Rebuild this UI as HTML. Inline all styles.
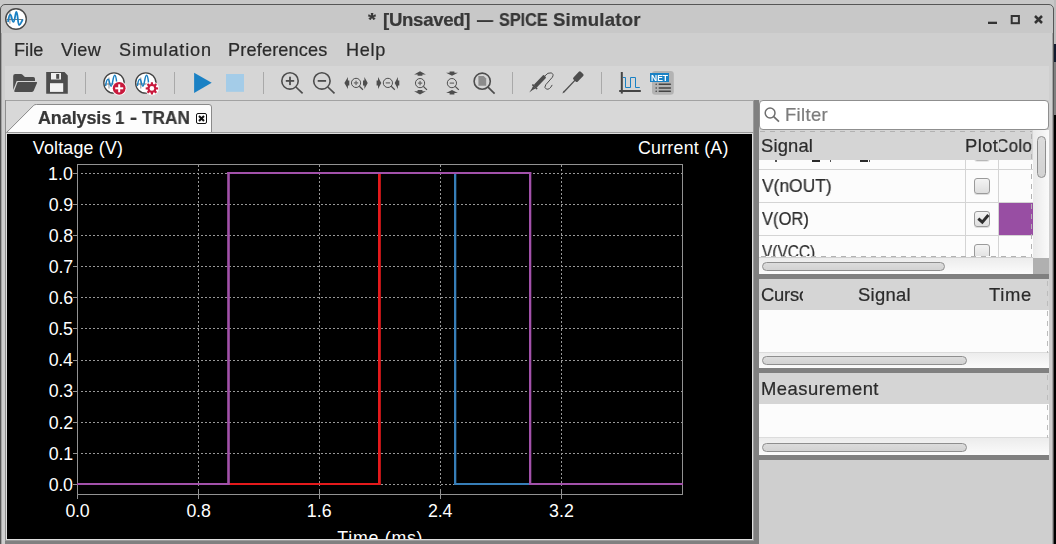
<!DOCTYPE html><html><head><meta charset="utf-8"><title>SPICE Simulator</title><style>
html,body{margin:0;padding:0;}
body{width:1056px;height:544px;overflow:hidden;position:relative;background:#cfcfcf;font-family:'Liberation Sans',sans-serif;}
.a{position:absolute;}
.t{position:absolute;white-space:pre;line-height:40px;height:40px;}
.ui{will-change:transform;-webkit-text-stroke:.22px currentColor;}
.hdr{background:#d5d5d5;}
.band{background:#808080;}
.track{background:linear-gradient(#ececec,#fbfbfb);}
.thumb{position:absolute;box-sizing:border-box;border:1px solid #8e8e8e;border-radius:5px;background:linear-gradient(#dcdcdc,#d2d2d2);}
.cb{position:absolute;box-sizing:border-box;width:16px;height:16px;border:1px solid #9a9a9a;border-radius:3px;background:linear-gradient(#f4f4f4,#dedede);box-shadow:0 1px 0 rgba(0,0,0,0.12);}
.sep{position:absolute;top:72px;width:1px;height:22px;background:#a9a9a9;}
</style></head><body><div class="a" style="left:0;top:0;width:1056px;height:5px;background:#c8c8c8"></div><div class="a" style="left:0;top:4px;width:1054px;height:560px;box-sizing:border-box;border:1px solid #565656;border-radius:5px 5px 0 0;background:#c8c8c8;"></div><div class="a" style="left:1054px;top:0;width:2px;height:44px;background:#bcbcbc"></div><div class="a" style="left:1054px;top:44px;width:2px;height:18px;background:#111a2e"></div><div class="a" style="left:1054px;top:62px;width:2px;height:53px;background:#7f7f7f"></div><div class="a" style="left:1054px;top:115px;width:2px;height:429px;background:#000"></div><div class="a" style="left:1px;top:33px;width:1052px;height:67px;background:#cfcfcf"></div><div class="a" style="left:5px;top:66px;width:1044px;height:34px;background:#d6d6d6"></div><div class="a" style="left:1px;top:100px;width:1052px;height:444px;background:#cfcfcf"></div><div class="a" style="left:1px;top:33px;width:1px;height:511px;background:#a4a4a4"></div><div class="a" style="left:1052px;top:33px;width:1px;height:511px;background:#a4a4a4"></div><svg class="a" style="left:0;top:5px" width="34" height="28" viewBox="0 5 34 28"><circle cx="16" cy="19" r="10.3" fill="#fff" stroke="#4a4a4a" stroke-width="1.4"/><line x1="6.5" x2="23" y1="19.5" y2="19.5" stroke="#555" stroke-width=".8"/><line x1="9.9" x2="9.9" y1="12" y2="23.8" stroke="#777" stroke-width=".8"/><path d="M8.1 21.3 C8.8 16.5 9.4 14.7 10.3 14.7 C11.6 14.7 12 21.9 13.4 21.9 C15 21.9 15.2 11.9 16.4 11.9 C17.9 11.9 17.7 25 19.1 25 C20.4 25 21 22.5 22.5 20" fill="none" stroke="#1a81c4" stroke-width="1.8" stroke-linecap="round"/></svg><svg class="a" style="left:980px;top:8px" width="70" height="22" viewBox="980 8 70 22"><rect x="988" y="21.7" width="9" height="2.3" fill="#333"/><rect x="1011.7" y="16" width="7.2" height="7.2" fill="none" stroke="#333" stroke-width="2"/><path d="M1035 16 l7 7 M1042 16 l-7 7" stroke="#333" stroke-width="2.5" fill="none"/></svg><span class="t ui" style="left:368.38px;top:0.0px;font:bold 18.6px/40px 'Liberation Sans',sans-serif;letter-spacing:0.0px;color:#383838;transform:scaleX(1.1054);transform-origin:0 0;">*</span><span class="t ui" style="left:383.04px;top:0.0px;font:bold 18.6px/40px 'Liberation Sans',sans-serif;letter-spacing:-0.291px;color:#383838;">[Unsaved]</span><span class="t ui" style="left:476.79px;top:0.0px;font:bold 18.6px/40px 'Liberation Sans',sans-serif;letter-spacing:0.0px;color:#383838;transform:scaleX(0.8631);transform-origin:0 0;">—</span><span class="t ui" style="left:498.53px;top:0.0px;font:bold 18.6px/40px 'Liberation Sans',sans-serif;letter-spacing:0.0px;color:#383838;transform:scaleX(0.8711);transform-origin:0 0;">SPICE</span><span class="t ui" style="left:552.59px;top:0.0px;font:bold 18.6px/40px 'Liberation Sans',sans-serif;letter-spacing:0.221px;color:#383838;">Simulator</span><span class="t ui" style="left:13.74px;top:29.6px;font:normal 18.1px/40px 'Liberation Sans',sans-serif;letter-spacing:0.052px;color:#2b2b2b;">File</span><span class="t ui" style="left:60.92px;top:29.6px;font:normal 18.1px/40px 'Liberation Sans',sans-serif;letter-spacing:0.289px;color:#2b2b2b;">View</span><span class="t ui" style="left:118.56px;top:29.6px;font:normal 18.1px/40px 'Liberation Sans',sans-serif;letter-spacing:0.83px;color:#2b2b2b;">Simulation</span><span class="t ui" style="left:227.79px;top:29.6px;font:normal 18.1px/40px 'Liberation Sans',sans-serif;letter-spacing:0.18px;color:#2b2b2b;">Preferences</span><span class="t ui" style="left:345.99px;top:29.6px;font:normal 18.1px/40px 'Liberation Sans',sans-serif;letter-spacing:0.661px;color:#2b2b2b;">Help</span><svg class="a" style="left:0;top:66px" width="700" height="34" viewBox="0 66 700 34"><path d="M13.2 76 Q13.2 74 15.2 74 H21 Q21.9 74 22.6 74.7 L24.3 76.4 Q24.9 77 25.8 77 H33.2 Q35 77 35 78.8 V80.9 H16.7 L13.2 90 Z" fill="#4d4d4d"/><path d="M18.4 82 H36.3 Q37.5 82 37 83.1 L33.7 90.8 Q33.2 91.9 32 91.9 H15 Q13.8 91.9 14.3 90.8 L17.3 82.8 Q17.6 82 18.4 82 Z" fill="#4d4d4d"/><path d="M46.2 72 h18.3 l3.3 3.6 v18.2 h-21.6 z" fill="#4d4d4d"/><rect x="51" y="73" width="10" height="6.5" fill="#f0f0f0"/><rect x="56.2" y="74" width="3" height="4.8" fill="#4d4d4d"/><rect x="50" y="83.2" width="13.2" height="8.7" fill="#f2f2f2"/><circle cx="114" cy="83" r="10.2" fill="#fff" stroke="#444" stroke-width="1.3"/><line x1="104.5" x2="118" y1="84" y2="84" stroke="#555" stroke-width="0.8"/><line x1="109" x2="109" y1="77.5" y2="88.5" stroke="#777" stroke-width="0.8"/><path d="M105.7 85.4 C106.4 80.5 107.4 79.2 108.2 79.3 C109.4 79.4 109.8 86.2 111.1 86.2 C112.6 86.2 113 75.3 114.8 75.3 C116.2 75.3 116.6 82 117.2 86" fill="none" stroke="#1a81c4" stroke-width="1.5" stroke-linecap="round"/><circle cx="145.8" cy="83" r="10.2" fill="#fff" stroke="#444" stroke-width="1.3"/><line x1="136.3" x2="149.8" y1="84" y2="84" stroke="#555" stroke-width="0.8"/><line x1="140.8" x2="140.8" y1="77.5" y2="88.5" stroke="#777" stroke-width="0.8"/><path d="M137.5 85.4 C138.2 80.5 139.2 79.2 140.0 79.3 C141.2 79.4 141.6 86.2 142.9 86.2 C144.4 86.2 144.8 75.3 146.6 75.3 C148.0 75.3 148.4 82 149.0 86" fill="none" stroke="#1a81c4" stroke-width="1.5" stroke-linecap="round"/><circle cx="119.2" cy="88.3" r="7.3" fill="#fff"/><circle cx="119.2" cy="88.3" r="6.4" fill="#c8193c"/><rect x="115.2" y="87.3" width="8" height="2" fill="#fff"/><rect x="118.2" y="84.3" width="2" height="8" fill="#fff"/><circle cx="151.9" cy="88.4" r="7" fill="#fff"/><polygon points="158.12,87.40 158.12,89.40 156.24,89.60 155.82,90.62 157.01,92.09 155.59,93.51 154.12,92.32 153.10,92.74 152.90,94.62 150.90,94.62 150.70,92.74 149.68,92.32 148.21,93.51 146.79,92.09 147.98,90.62 147.56,89.60 145.68,89.40 145.68,87.40 147.56,87.20 147.98,86.18 146.79,84.71 148.21,83.29 149.68,84.48 150.70,84.06 150.90,82.18 152.90,82.18 153.10,84.06 154.12,84.48 155.59,83.29 157.01,84.71 155.82,86.18 156.24,87.20" fill="#c8193c"/><circle cx="151.9" cy="88.4" r="2.3" fill="#fff"/><polygon points="194.1,72.7 194.1,93 211.7,82.8" fill="#1a81c4"/><rect x="226" y="74" width="18" height="17.8" fill="#a4cce8"/><circle cx="290" cy="80.9" r="8.2" fill="none" stroke="#4d4d4d" stroke-width="1.6"/><line x1="295.9" y1="87" x2="302.6" y2="93.3" stroke="#4d4d4d" stroke-width="1.7"/><rect x="285.8" y="80" width="8.4" height="1.8" fill="#4d4d4d"/><rect x="289.1" y="76.7" width="1.8" height="8.4" fill="#4d4d4d"/><circle cx="321.9" cy="80.9" r="8.2" fill="none" stroke="#4d4d4d" stroke-width="1.6"/><line x1="327.79999999999995" y1="87" x2="334.5" y2="93.3" stroke="#4d4d4d" stroke-width="1.7"/><rect x="317.7" y="80" width="8.4" height="1.8" fill="#4d4d4d"/><circle cx="356.05" cy="82.9" r="4.6" fill="none" stroke="#4d4d4d" stroke-width="1"/><line x1="359.35" y1="86.2" x2="362.95" y2="89.7" stroke="#4d4d4d" stroke-width="1.2"/><rect x="353.85" y="82.30000000000001" width="4.4" height="1.2" fill="#666"/><rect x="355.45" y="80.7" width="1.2" height="4.4" fill="#666"/><polygon points="344.4,83 347.9,77.1 347.9,80.6 349.29999999999995,80.6 349.29999999999995,85.4 347.9,85.4 347.9,88.9" fill="#4d4d4d"/><polygon points="367.7,83 364.4,77.1 364.4,80.6 363.0,80.6 363.0,85.4 364.4,85.4 364.4,88.9" fill="#4d4d4d"/><circle cx="387.9" cy="82.9" r="4.6" fill="none" stroke="#4d4d4d" stroke-width="1"/><line x1="391.2" y1="86.2" x2="394.79999999999995" y2="89.7" stroke="#4d4d4d" stroke-width="1.2"/><rect x="385.7" y="82.30000000000001" width="4.4" height="1.2" fill="#666"/><polygon points="381.3,83 378,77.1 378,80.6 376.6,80.6 376.6,85.4 378,85.4 378,88.9" fill="#4d4d4d"/><polygon points="394.7,83 397.9,77.1 397.9,80.6 399.29999999999995,80.6 399.29999999999995,85.4 397.9,85.4 397.9,88.9" fill="#4d4d4d"/><circle cx="420.05" cy="83.1" r="4.6" fill="none" stroke="#4d4d4d" stroke-width="1"/><line x1="423.35" y1="86.39999999999999" x2="426.95" y2="89.89999999999999" stroke="#4d4d4d" stroke-width="1.2"/><rect x="417.85" y="82.5" width="4.4" height="1.2" fill="#666"/><rect x="419.45" y="80.89999999999999" width="1.2" height="4.4" fill="#666"/><polygon points="420,71.3 414.1,74.5 417.6,74.5 417.6,75.8 422.4,75.8 422.4,74.5 425.9,74.5" fill="#4d4d4d"/><polygon points="420,94.5 414.1,91.3 417.6,91.3 417.6,90.0 422.4,90.0 422.4,91.3 425.9,91.3" fill="#4d4d4d"/><circle cx="451.9" cy="83.1" r="4.6" fill="none" stroke="#4d4d4d" stroke-width="1"/><line x1="455.2" y1="86.39999999999999" x2="458.79999999999995" y2="89.89999999999999" stroke="#4d4d4d" stroke-width="1.2"/><rect x="449.7" y="82.5" width="4.4" height="1.2" fill="#666"/><polygon points="452,75.8 446.1,72.8 449.6,72.8 449.6,71.5 454.4,71.5 454.4,72.8 457.9,72.8" fill="#4d4d4d"/><polygon points="452,90.1 446.1,93.1 449.6,93.1 449.6,94.39999999999999 454.4,94.39999999999999 454.4,93.1 457.9,93.1" fill="#4d4d4d"/><circle cx="482.2" cy="81.2" r="8.1" fill="none" stroke="#4d4d4d" stroke-width="1.6"/><line x1="488" y1="87.2" x2="494.6" y2="93.6" stroke="#4d4d4d" stroke-width="1.7"/><path d="M478.4 76 h5.3 l2.5 2.6 v7.2 h-7.8 z" fill="#8c8c8c"/><g transform="translate(529.2,92.6) rotate(-46.5)" fill="#4d4d4d"><polygon points="0,0 4.2,-0.7 7.4,-1.7 7.4,1.7 4.2,0.7"/><rect x="7.2" y="-3.3" width="1.7" height="6.6" rx=".5"/><rect x="8.6" y="-2" width="14.2" height="4" rx="1"/></g><path d="M544.6 76.2 q3.4-4.2 6.6-3.3 q3 1.1 1.2 4.3 l-6.6 7.5 q-2.2 3 .6 4.4 q3.2 1 5.8-4.2" fill="none" stroke="#4d4d4d" stroke-width="1"/><g transform="translate(562.3,93.6) rotate(-46.5)" fill="#4d4d4d"><polygon points="0,0 3,-1 3,1"/><rect x="2.6" y="-0.65" width="16" height="1.3"/><rect x="18" y="-3" width="10.6" height="6" rx="1.4"/></g><rect x="620.8" y="72" width="2" height="21.6" fill="#444"/><rect x="619.2" y="90" width="21.6" height="2" fill="#444"/><path d="M623 77.5 h2.5 v10 h5 v-10 h5 v10 h4.3" fill="none" stroke="#1a81c4" stroke-width="1"/><rect x="652" y="71" width="21.8" height="23.8" rx="3.2" fill="#b3b3b3"/><rect x="650" y="73" width="19" height="9" fill="#1a81c4"/><text x="659.5" y="80.9" font-family="Liberation Sans" font-weight="bold" font-size="9.3" text-anchor="middle" fill="#fff" textLength="17" lengthAdjust="spacingAndGlyphs">NET</text><rect x="658.5" y="83.55" width="12.6" height="1.5" rx=".7" fill="#444"/><circle cx="656.2" cy="84.3" r=".8" fill="#444"/><rect x="658.5" y="87.25" width="12.6" height="1.5" rx=".7" fill="#444"/><circle cx="656.2" cy="88" r=".8" fill="#444"/><rect x="658.5" y="90.55" width="12.6" height="1.5" rx=".7" fill="#444"/><circle cx="656.2" cy="91.3" r=".8" fill="#444"/></svg><div class="sep" style="left:85px"></div><div class="sep" style="left:174px"></div><div class="sep" style="left:263px"></div><div class="sep" style="left:512px"></div><div class="sep" style="left:601px"></div><div class="a" style="left:5px;top:100px;width:749px;height:1px;background:#a2a2a2"></div><div class="a" style="left:5px;top:100px;width:1px;height:441px;background:#8e8e8e"></div><div class="a" style="left:6px;top:101px;width:748px;height:32px;background:#d8d8d8"></div><div class="a" style="left:6px;top:132px;width:748px;height:1px;background:#9a9a9a"></div><div class="a" style="left:6px;top:133px;width:748px;height:1px;background:#dedede"></div><div class="a" style="left:6px;top:133px;width:1px;height:407px;background:#dedede"></div><svg class="a" style="left:5px;top:102px" width="211" height="31" viewBox="5 102 211 31"><path d="M6.1 133 L33.9 105.2 Q34.6 104.5 36.4 104.5 H209 Q211.5 104.5 211.5 107 V133" fill="#fdfdfd" stroke="#8a8a8a" stroke-width="1"/></svg><div class="a" style="left:6px;top:132px;width:748px;height:1px;background:#9a9a9a"></div><span class="t ui" style="left:37.74px;top:98.3px;font:bold 18px/40px 'Liberation Sans',sans-serif;letter-spacing:-0.125px;color:#383838;">Analysis</span><span class="t ui" style="left:115.17px;top:98.3px;font:bold 18px/40px 'Liberation Sans',sans-serif;letter-spacing:0.0px;color:#383838;transform:scaleX(0.9299);transform-origin:0 0;">1</span><span class="t ui" style="left:130.26px;top:98.3px;font:bold 18px/40px 'Liberation Sans',sans-serif;letter-spacing:0.0px;color:#383838;transform:scaleX(1.1776);transform-origin:0 0;">-</span><span class="t ui" style="left:142.13px;top:98.3px;font:bold 18px/40px 'Liberation Sans',sans-serif;letter-spacing:0.0px;color:#383838;transform:scaleX(0.9583);transform-origin:0 0;">TRAN</span><svg class="a" style="left:195px;top:112px" width="13" height="13" viewBox="195 112 13 13"><rect x="196.5" y="113.5" width="10" height="10" rx="1.5" fill="#fff" stroke="#111" stroke-width="1"/><path d="M199 116 l5 5 M204 116 l-5 5" stroke="#111" stroke-width="2"/></svg><svg class="a" style="left:7px;top:134px" width="745" height="405" viewBox="7 134 745 405" shape-rendering="crispEdges"><rect x="7" y="134" width="745" height="405" fill="#000"/><line x1="81" x2="682" y1="173.5" y2="173.5" stroke="#989898" stroke-width="1" stroke-dasharray="2 2"/><line x1="73" x2="77" y1="173.5" y2="173.5" stroke="#929292" stroke-width="1"/><line x1="81" x2="682" y1="204.5" y2="204.5" stroke="#989898" stroke-width="1" stroke-dasharray="2 2"/><line x1="73" x2="77" y1="204.5" y2="204.5" stroke="#929292" stroke-width="1"/><line x1="81" x2="682" y1="235.5" y2="235.5" stroke="#989898" stroke-width="1" stroke-dasharray="2 2"/><line x1="73" x2="77" y1="235.5" y2="235.5" stroke="#929292" stroke-width="1"/><line x1="81" x2="682" y1="266.5" y2="266.5" stroke="#989898" stroke-width="1" stroke-dasharray="2 2"/><line x1="73" x2="77" y1="266.5" y2="266.5" stroke="#929292" stroke-width="1"/><line x1="81" x2="682" y1="297.5" y2="297.5" stroke="#989898" stroke-width="1" stroke-dasharray="2 2"/><line x1="73" x2="77" y1="297.5" y2="297.5" stroke="#929292" stroke-width="1"/><line x1="81" x2="682" y1="328.5" y2="328.5" stroke="#989898" stroke-width="1" stroke-dasharray="2 2"/><line x1="73" x2="77" y1="328.5" y2="328.5" stroke="#929292" stroke-width="1"/><line x1="81" x2="682" y1="360.5" y2="360.5" stroke="#989898" stroke-width="1" stroke-dasharray="2 2"/><line x1="73" x2="77" y1="360.5" y2="360.5" stroke="#929292" stroke-width="1"/><line x1="81" x2="682" y1="391.5" y2="391.5" stroke="#989898" stroke-width="1" stroke-dasharray="2 2"/><line x1="73" x2="77" y1="391.5" y2="391.5" stroke="#929292" stroke-width="1"/><line x1="81" x2="682" y1="422.5" y2="422.5" stroke="#989898" stroke-width="1" stroke-dasharray="2 2"/><line x1="73" x2="77" y1="422.5" y2="422.5" stroke="#929292" stroke-width="1"/><line x1="81" x2="682" y1="453.5" y2="453.5" stroke="#989898" stroke-width="1" stroke-dasharray="2 2"/><line x1="73" x2="77" y1="453.5" y2="453.5" stroke="#929292" stroke-width="1"/><line x1="81" x2="682" y1="484.5" y2="484.5" stroke="#989898" stroke-width="1" stroke-dasharray="2 2"/><line x1="73" x2="77" y1="484.5" y2="484.5" stroke="#929292" stroke-width="1"/><line y1="165" y2="486" x1="198.5" x2="198.5" stroke="#989898" stroke-width="1" stroke-dasharray="2 2"/><line y1="165" y2="486" x1="319.5" x2="319.5" stroke="#989898" stroke-width="1" stroke-dasharray="2 2"/><line y1="165" y2="486" x1="440.5" x2="440.5" stroke="#989898" stroke-width="1" stroke-dasharray="2 2"/><line y1="165" y2="486" x1="561.5" x2="561.5" stroke="#989898" stroke-width="1" stroke-dasharray="2 2"/><line y1="489" y2="499" x1="77.5" x2="77.5" stroke="#929292" stroke-width="1"/><line y1="489" y2="499" x1="198.5" x2="198.5" stroke="#929292" stroke-width="1"/><line y1="489" y2="499" x1="319.5" x2="319.5" stroke="#929292" stroke-width="1"/><line y1="489" y2="499" x1="440.5" x2="440.5" stroke="#929292" stroke-width="1"/><line y1="489" y2="499" x1="561.5" x2="561.5" stroke="#929292" stroke-width="1"/><rect x="77.5" y="164.5" width="605" height="330" fill="none" stroke="#929292" stroke-width="1"/><g shape-rendering="auto"><rect x="229" y="483" width="151.3" height="2" fill="#e41a1c"/><rect x="378" y="172" width="2.8" height="313" fill="#e41a1c"/><rect x="454" y="172" width="2.3" height="313" fill="#377eb8"/><rect x="454" y="483" width="76" height="2" fill="#377eb8"/><rect x="77" y="483" width="152" height="2" fill="#a251aa"/><rect x="227.2" y="172" width="2.6" height="313" fill="#a251aa"/><rect x="227.2" y="172" width="304.00000000000006" height="2" fill="#a251aa"/><rect x="529" y="172" width="2.3" height="313" fill="#a251aa"/><rect x="529" y="483" width="154" height="2" fill="#a251aa"/></g></svg><div class="a" style="left:7px;top:134px;width:745px;height:405px;overflow:hidden"><div class="a" style="left:-7px;top:-134px"><span class="t" style="left:32.87px;top:127.7px;font:normal 17.8px/40px 'Liberation Sans',sans-serif;letter-spacing:0.213px;color:#ffffff;">Voltage (V)</span><span class="t" style="left:637.91px;top:127.6px;font:normal 17.8px/40px 'Liberation Sans',sans-serif;letter-spacing:0.254px;color:#ffffff;">Current (A)</span><span class="t" style="left:337.3px;top:517.5px;font:normal 17.8px/40px 'Liberation Sans',sans-serif;letter-spacing:0.732px;color:#ffffff;">Time (ms)</span><span class="t" style="left:47.99px;top:153.7px;font:normal 17.8px/40px 'Liberation Sans',sans-serif;letter-spacing:0.127px;color:#ffffff;">1.0</span><span class="t" style="left:48.69px;top:184.8px;font:normal 17.8px/40px 'Liberation Sans',sans-serif;letter-spacing:-0.188px;color:#ffffff;">0.9</span><span class="t" style="left:48.69px;top:215.9px;font:normal 17.8px/40px 'Liberation Sans',sans-serif;letter-spacing:-0.157px;color:#ffffff;">0.8</span><span class="t" style="left:48.69px;top:247.0px;font:normal 17.8px/40px 'Liberation Sans',sans-serif;letter-spacing:-0.137px;color:#ffffff;">0.7</span><span class="t" style="left:48.69px;top:278.1px;font:normal 17.8px/40px 'Liberation Sans',sans-serif;letter-spacing:-0.157px;color:#ffffff;">0.6</span><span class="t" style="left:48.69px;top:309.2px;font:normal 17.8px/40px 'Liberation Sans',sans-serif;letter-spacing:-0.202px;color:#ffffff;">0.5</span><span class="t" style="left:48.69px;top:340.3px;font:normal 17.8px/40px 'Liberation Sans',sans-serif;letter-spacing:-0.32px;color:#ffffff;">0.4</span><span class="t" style="left:48.69px;top:371.4px;font:normal 17.8px/40px 'Liberation Sans',sans-serif;letter-spacing:-0.157px;color:#ffffff;">0.3</span><span class="t" style="left:48.69px;top:402.5px;font:normal 17.8px/40px 'Liberation Sans',sans-serif;letter-spacing:-0.137px;color:#ffffff;">0.2</span><span class="t" style="left:48.69px;top:433.6px;font:normal 17.8px/40px 'Liberation Sans',sans-serif;letter-spacing:-0.18px;color:#ffffff;">0.1</span><span class="t" style="left:48.69px;top:464.7px;font:normal 17.8px/40px 'Liberation Sans',sans-serif;letter-spacing:-0.196px;color:#ffffff;">0.0</span><span class="t" style="left:65.39px;top:490.7px;font:normal 17.8px/40px 'Liberation Sans',sans-serif;letter-spacing:-0.188px;color:#ffffff;">0.0</span><span class="t" style="left:186.39px;top:490.7px;font:normal 17.8px/40px 'Liberation Sans',sans-serif;letter-spacing:-0.153px;color:#ffffff;">0.8</span><span class="t" style="left:306.69px;top:490.7px;font:normal 17.8px/40px 'Liberation Sans',sans-serif;letter-spacing:0.151px;color:#ffffff;">1.6</span><span class="t" style="left:428.02px;top:490.7px;font:normal 17.8px/40px 'Liberation Sans',sans-serif;letter-spacing:-0.147px;color:#ffffff;">2.4</span><span class="t" style="left:549.03px;top:490.7px;font:normal 17.8px/40px 'Liberation Sans',sans-serif;letter-spacing:0.139px;color:#ffffff;">3.2</span></div></div><div class="a" style="left:752px;top:133px;width:1px;height:407px;background:#dedede"></div><div class="a" style="left:753px;top:101px;width:1px;height:440px;background:#9c9c9c"></div><div class="a" style="left:6px;top:539px;width:747px;height:1px;background:#dedede"></div><div class="a" style="left:5px;top:540px;width:749px;height:1px;background:#9c9c9c"></div><div class="a band" style="left:5px;top:541px;width:754px;height:3px"></div><div class="a band" style="left:754px;top:100px;width:5px;height:444px"></div><div class="a" style="left:759px;top:100px;width:290px;height:30px;box-sizing:border-box;border:1px solid #8f8f8f;border-radius:4px;background:#fff"></div><svg class="a" style="left:762px;top:104px" width="22" height="22" viewBox="762 104 22 22"><circle cx="770.1" cy="113" r="4.9" fill="none" stroke="#6e6e6e" stroke-width="1.5"/><line x1="773.7" y1="116.6" x2="779" y2="121.6" stroke="#6e6e6e" stroke-width="1.7"/></svg><span class="t ui" style="left:785.36px;top:94.8px;font:normal 18.4px/40px 'Liberation Sans',sans-serif;letter-spacing:0.355px;color:#7c7c7c;">Filter</span><div class="a" style="left:759px;top:130px;width:290px;height:127px;background:#fcfcfc"></div><div class="a hdr" style="left:759px;top:130px;width:274px;height:30px"></div><div class="a" style="left:1033px;top:130px;width:16px;height:128px;background:linear-gradient(90deg,#e9e9e9,#fafafa)"></div><div class="thumb" style="left:1037px;top:136px;width:9px;height:42px"></div><div class="a" style="left:965px;top:160px;width:1px;height:97px;background:#d4d4d4"></div><div class="a" style="left:998px;top:160px;width:1px;height:97px;background:#d4d4d4"></div><div class="a" style="left:759px;top:169px;width:274px;height:1px;background:#d4d4d4"></div><div class="a" style="left:759px;top:202px;width:274px;height:1px;background:#d4d4d4"></div><div class="a" style="left:759px;top:235px;width:274px;height:1px;background:#d4d4d4"></div><div class="a" style="left:999px;top:203px;width:34px;height:32px;background:#984ea3"></div><span class="t ui" style="left:761.11px;top:125.5px;font:normal 18.4px/40px 'Liberation Sans',sans-serif;letter-spacing:0.149px;color:#2b2b2b;">Signal</span><span class="t ui" style="left:965.16px;top:125.5px;font:normal 18.4px/40px 'Liberation Sans',sans-serif;letter-spacing:0.416px;color:#2b2b2b;">Plot</span><div class="a" style="left:998.5px;top:132px;width:33px;height:28px;overflow:hidden"><span class="t ui" style="left:-2.5px;top:-6.5px;font:normal 18.4px/40px 'Liberation Sans';letter-spacing:.4px;color:#2b2b2b;transform:scaleX(.92);transform-origin:0 0">Color</span></div><div class="a" style="left:759px;top:160px;width:274px;height:96px;overflow:hidden"><div class="a" style="left:-759px;top:-160px"><span class="t ui" style="left:761.77px;top:165.8px;font:normal 18.4px/40px 'Liberation Sans',sans-serif;letter-spacing:0.0px;color:#2b2b2b;transform:scaleX(0.9462);transform-origin:0 0;">V(nOUT)</span><span class="t ui" style="left:761.79px;top:198.9px;font:normal 18.4px/40px 'Liberation Sans',sans-serif;letter-spacing:0.0px;color:#2b2b2b;transform:scaleX(0.8979);transform-origin:0 0;">V(OR)</span><span class="t ui" style="left:761.81px;top:232.0px;font:normal 18.4px/40px 'Liberation Sans',sans-serif;letter-spacing:0.0px;color:#2b2b2b;transform:scaleX(0.8375);transform-origin:0 0;">V(VCC)</span><div class="a" style="left:811.7px;top:160.3px;width:8.2px;height:1.8px;background:#2b2b2b"></div><div class="a" style="left:859.8px;top:160.3px;width:8.2px;height:1.8px;background:#2b2b2b"></div><div class="a" style="left:775.4px;top:160.3px;width:1.3px;height:1.3px;background:#555"></div><div class="a" style="left:830.0px;top:160.3px;width:1.3px;height:1.3px;background:#555"></div><div class="a" style="left:869.2px;top:160.3px;width:1.3px;height:1.3px;background:#555"></div><div class="cb" style="left:974px;top:144.6px;opacity:.7"></div><div class="cb" style="left:974px;top:178px"></div><div class="cb" style="left:974px;top:211px"></div><div class="cb" style="left:974px;top:244px"></div><svg class="a" style="left:974px;top:211px" width="16" height="16" viewBox="0 0 16 16"><path d="M4.3 7.6 L8.3 11.2 L14.4 4" fill="none" stroke="#2e2e2e" stroke-width="2.9"/></svg></div></div><svg class="a" style="left:759px;top:131px" width="274" height="127" viewBox="759 131 274 127" shape-rendering="crispEdges"><path d="M760 131.5 H1032 M761 256.5 H1032" stroke="#b2b2b2" stroke-width="1" stroke-dasharray="5 5" fill="none"/><path d="M1031.5 134 V257" stroke="#b2b2b2" stroke-width="1" stroke-dasharray="5 5" stroke-dashoffset="0" fill="none"/></svg><div class="a track" style="left:759px;top:258px;width:274px;height:16px"></div><div class="a" style="left:1033px;top:258px;width:16px;height:16px;background:#b0b0b0"></div><div class="thumb" style="left:762px;top:262px;width:183px;height:9px"></div><div class="a band" style="left:759px;top:274px;width:290px;height:5px"></div><div class="a hdr" style="left:759px;top:279px;width:290px;height:31px"></div><div class="a" style="left:759px;top:310px;width:290px;height:42px;background:#fcfcfc"></div><div class="a" style="left:759px;top:352px;width:290px;height:1px;background:#dcdcdc"></div><div class="a track" style="left:759px;top:353px;width:290px;height:15px"></div><div class="thumb" style="left:762px;top:356px;width:205px;height:9px"></div><div class="a band" style="left:759px;top:368px;width:290px;height:5px"></div><div class="a" style="left:761px;top:279px;width:42px;height:31px;overflow:hidden"><span class="t ui" style="left:0.2px;top:-4.5px;font:normal 18.4px/40px 'Liberation Sans';letter-spacing:-.2px;color:#2b2b2b">Cursor</span></div><span class="t ui" style="left:857.81px;top:274.5px;font:normal 18.4px/40px 'Liberation Sans',sans-serif;letter-spacing:0.271px;color:#2b2b2b;">Signal</span><span class="t ui" style="left:989.15px;top:274.5px;font:normal 18.4px/40px 'Liberation Sans',sans-serif;letter-spacing:0.71px;color:#2b2b2b;">Time</span><svg class="a" style="left:1047px;top:279px" width="1" height="74" shape-rendering="crispEdges"><path d="M.5 2 V74" stroke="#bcbcbc" stroke-width="1" stroke-dasharray="5 5"/></svg><div class="a hdr" style="left:759px;top:373px;width:290px;height:31px"></div><div class="a" style="left:759px;top:404px;width:290px;height:33px;background:#fcfcfc"></div><div class="a" style="left:759px;top:437px;width:290px;height:1px;background:#dcdcdc"></div><div class="a track" style="left:759px;top:438px;width:290px;height:17px"></div><div class="thumb" style="left:762px;top:443px;width:205px;height:9px"></div><div class="a band" style="left:759px;top:455px;width:290px;height:5px"></div><span class="t ui" style="left:760.86px;top:368.9px;font:normal 18.4px/40px 'Liberation Sans',sans-serif;letter-spacing:0.504px;color:#2b2b2b;">Measurement</span><svg class="a" style="left:1047px;top:373px" width="1" height="65" shape-rendering="crispEdges"><path d="M.5 2 V65" stroke="#bcbcbc" stroke-width="1" stroke-dasharray="5 5"/></svg></body></html>
